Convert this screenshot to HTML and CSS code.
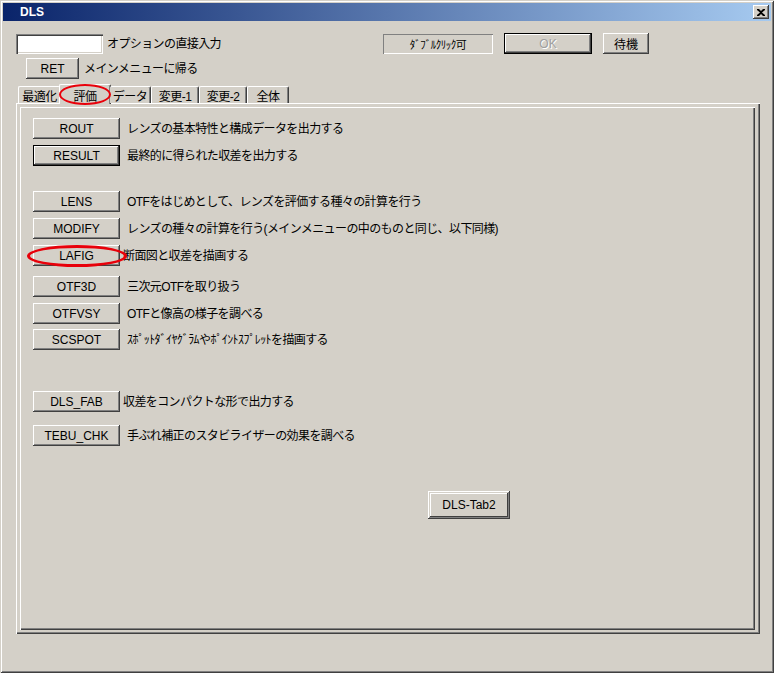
FILE: index.html
```html
<!DOCTYPE html>
<html>
<head>
<meta charset="utf-8">
<link rel="stylesheet" href="styles.css">
</head>
<body>
<div class="window">
  <div class="titlebar">
    <span class="title">DLS</span>
    <span class="close"><svg width="8" height="7" viewBox="0 0 8 7"><path d="M0 0h2l2 2 2-2h2v1L5 3.5 8 6v1H6L4 5 2 7H0V6l3-2.5L0 1z" fill="#000"/></svg></span>
  </div>
  <div class="client">
    <div class="row1">
      <div class="textbox"></div>
      <span class="lbl lbl-opt">オプションの直接入力</span>
      <div class="static">ﾀﾞﾌﾞﾙｸﾘｯｸ可</div>
      <div class="btn btn-default btn-disabled ok">OK</div>
      <div class="btn taiki">待機</div>
    </div>
    <div class="row2">
      <div class="btn ret">RET</div>
      <span class="lbl lbl-ret">メインメニューに帰る</span>
    </div>
    <div class="tabs">
      <div class="tab t1">最適化</div>
      <div class="tab tab-sel t2">評価</div>
      <div class="tab t3">データ</div>
      <div class="tab t4">変更-1</div>
      <div class="tab t5">変更-2</div>
      <div class="tab t6">全体</div>
    </div>
    <div class="panel">
      <div class="group">
        <div class="item first"><div class="btn cmd">ROUT</div><span class="lbl desc">レンズの基本特性と構成データを出力する</span></div>
        <div class="item g7"><div class="btn btn-default cmd">RESULT</div><span class="lbl desc">最終的に得られた収差を出力する</span></div>
        <div class="item g26"><div class="btn cmd">LENS</div><span class="lbl desc">OTFをはじめとして、レンズを評価する種々の計算を行う</span></div>
        <div class="item g7"><div class="btn cmd">MODIFY</div><span class="lbl desc">レンズの種々の計算を行う(メインメニューの中のものと同じ、以下同様)</span></div>
        <div class="item g7"><div class="btn cmd">LAFIG</div><span class="lbl desc d3">断面図と収差を描画する</span></div>
        <div class="item g11"><div class="btn cmd">OTF3D</div><span class="lbl desc">三次元OTFを取り扱う</span></div>
        <div class="item g7"><div class="btn cmd">OTFVSY</div><span class="lbl desc">OTFと像高の様子を調べる</span></div>
        <div class="item g6"><div class="btn cmd">SCSPOT</div><span class="lbl desc">ｽﾎﾟｯﾄﾀﾞｲﾔｸﾞﾗﾑやﾎﾟｲﾝﾄｽﾌﾟﾚｯﾄを描画する</span></div>
        <div class="item g42"><div class="btn cmd">DLS_FAB</div><span class="lbl desc d3">収差をコンパクトな形で出力する</span></div>
        <div class="item g14"><div class="btn cmd">TEBU_CHK</div><span class="lbl desc">手ぶれ補正のスタビライザーの効果を調べる</span></div>
        <div class="tab2row"><div class="btn btn-tab2">DLS-Tab2</div></div>
      </div>
    </div>
  </div>
  <div class="mark mark-tab"></div>
  <div class="mark mark-lafig"></div>
</div>
</body>
</html>
```
FILE: styles.css
```css
* { box-sizing: border-box; }
html, body { margin: 0; padding: 0; background: #d4d0c8; }
body {
  font-family: "Liberation Sans", "Noto Sans CJK JP", sans-serif;
  font-size: 12px;
  color: #000;
}
.window {
  position: relative;
  width: 774px;
  height: 673px;
  background: #d4d0c8;
  padding: 3px;
  box-shadow: inset 1px 1px #d4d0c8, inset -1px -1px #404040, inset 2px 2px #fff, inset -2px -2px #808080;
  overflow: hidden;
}
.titlebar {
  height: 18px;
  display: flex;
  align-items: center;
  justify-content: space-between;
  background: linear-gradient(to right, #0a246a, #a6caf0);
  padding-left: 17px;
  padding-right: 2px;
}
.title {
  color: #fff;
  font-weight: bold;
  font-size: 12px;
  font-family: "Liberation Sans", sans-serif;
}
.close {
  width: 16px;
  height: 14px;
  background: #d4d0c8;
  display: flex;
  align-items: center;
  justify-content: center;
  box-shadow: inset -1px -1px #404040, inset 1px 1px #fff, inset -2px -2px #808080;
}
.client { padding-left: 13px; }
.lbl {
  letter-spacing: -0.6px;
  white-space: nowrap;
  line-height: 14px;
}
.row1 {
  display: flex;
  align-items: center;
  margin-top: 12px;
  height: 21px;
}
.textbox {
  width: 87px;
  height: 20px;
  background: #fff;
  box-shadow: inset 1px 1px #808080, inset 2px 2px #404040, inset -1px -1px #fff, inset -2px -2px #d4d0c8;
}
.lbl-opt { width: 276px; margin-left: 4px; }
.static {
  width: 110px;
  height: 20px;
  display: flex;
  align-items: center;
  justify-content: center;
  box-shadow: inset 1px 1px #808080, inset -1px -1px #fff;
  letter-spacing: -0.5px;
  font-size: 11px;
}
.btn {
  display: flex;
  align-items: center;
  justify-content: center;
  background: #d4d0c8;
  height: 21px;
  white-space: nowrap;
  box-shadow: inset -1px -1px #404040, inset 1px 1px #fff, inset -2px -2px #808080, inset 2px 2px #d4d0c8;
}
.btn-default {
  box-shadow: inset 0 0 0 1px #000, inset -2px -2px #404040, inset 2px 2px #fff, inset -3px -3px #808080;
}
.btn-disabled { color: #a0a0a0; text-shadow: 1px 1px #fff; }
.ok { width: 88px; margin-left: 11px; }
.taiki { width: 46px; margin-left: 11px; }
.row2 {
  display: flex;
  align-items: center;
  margin-top: 4px;
}
.ret { width: 53px; margin-left: 10px; }
.lbl-ret { margin-left: 5px; }
.tabs {
  display: flex;
  margin-top: 5px;
  margin-left: 2px;
  height: 19px;
  align-items: flex-end;
  position: relative;
  z-index: 1;
}
.tab {
  height: 17px;
  display: flex;
  align-items: center;
  justify-content: center;
  letter-spacing: -0.5px;
  padding-top: 1px;
  border-top: 1px solid #fff;
  border-left: 1px solid #fff;
  border-right: 1px solid #404040;
  box-shadow: inset -1px 0 #808080;
  border-top-left-radius: 2px;
  border-top-right-radius: 2px;
  background: #d4d0c8;
}
.tab-sel { height: 20px; margin-bottom: -1px; margin-left: -1px; margin-right: -1px; }
.t1 { width: 42px; border-right: none; box-shadow: none; }
.t2 { width: 52px; }
.t3 { width: 41px; border-left: none; }
.t4 { width: 48px; }
.t5 { width: 48px; }
.t6 { width: 42px; }
.panel {
  width: 744px;
  height: 531px;
  padding: 4px;
  box-shadow: inset 1px 1px #fff, inset -1px -1px #404040, inset -2px -2px #808080;
}
.group {
  width: 735px;
  height: 523px;
  padding: 11px 0 0 13px;
  box-shadow: inset 1px 1px #fff, inset -1px -1px #404040, inset -2px -2px #808080;
}
.item {
  display: flex;
  align-items: center;
}
.cmd { width: 87px; height: 21px; }
.desc { margin-left: 7px; }
.d3 { margin-left: 3px; }
.g6 { margin-top: 5px; }
.g7 { margin-top: 6px; }
.g11 { margin-top: 10px; }
.g14 { margin-top: 13px; }
.g26 { margin-top: 25px; }
.g42 { margin-top: 41px; }
.tab2row { margin-top: 45px; padding-left: 395px; }
.btn-tab2 {
  width: 82px;
  height: 28px;
  box-shadow: inset -1px -1px #404040, inset 1px 1px #fff, inset -2px -2px #808080, inset 2px 2px #d4d0c8, inset -3px -3px #404040, inset 3px 3px #fff;
}
.mark {
  position: absolute;
  border-radius: 50%;
  pointer-events: none;
  z-index: 5;
}
.mark-tab {
  left: 59px; top: 84px; width: 52px; height: 21px;
  border: 2px solid #e8000a;
}
.mark-lafig {
  left: 27px; top: 245px; width: 100px; height: 22px;
  border: 3px solid #e8000a;
}
```
